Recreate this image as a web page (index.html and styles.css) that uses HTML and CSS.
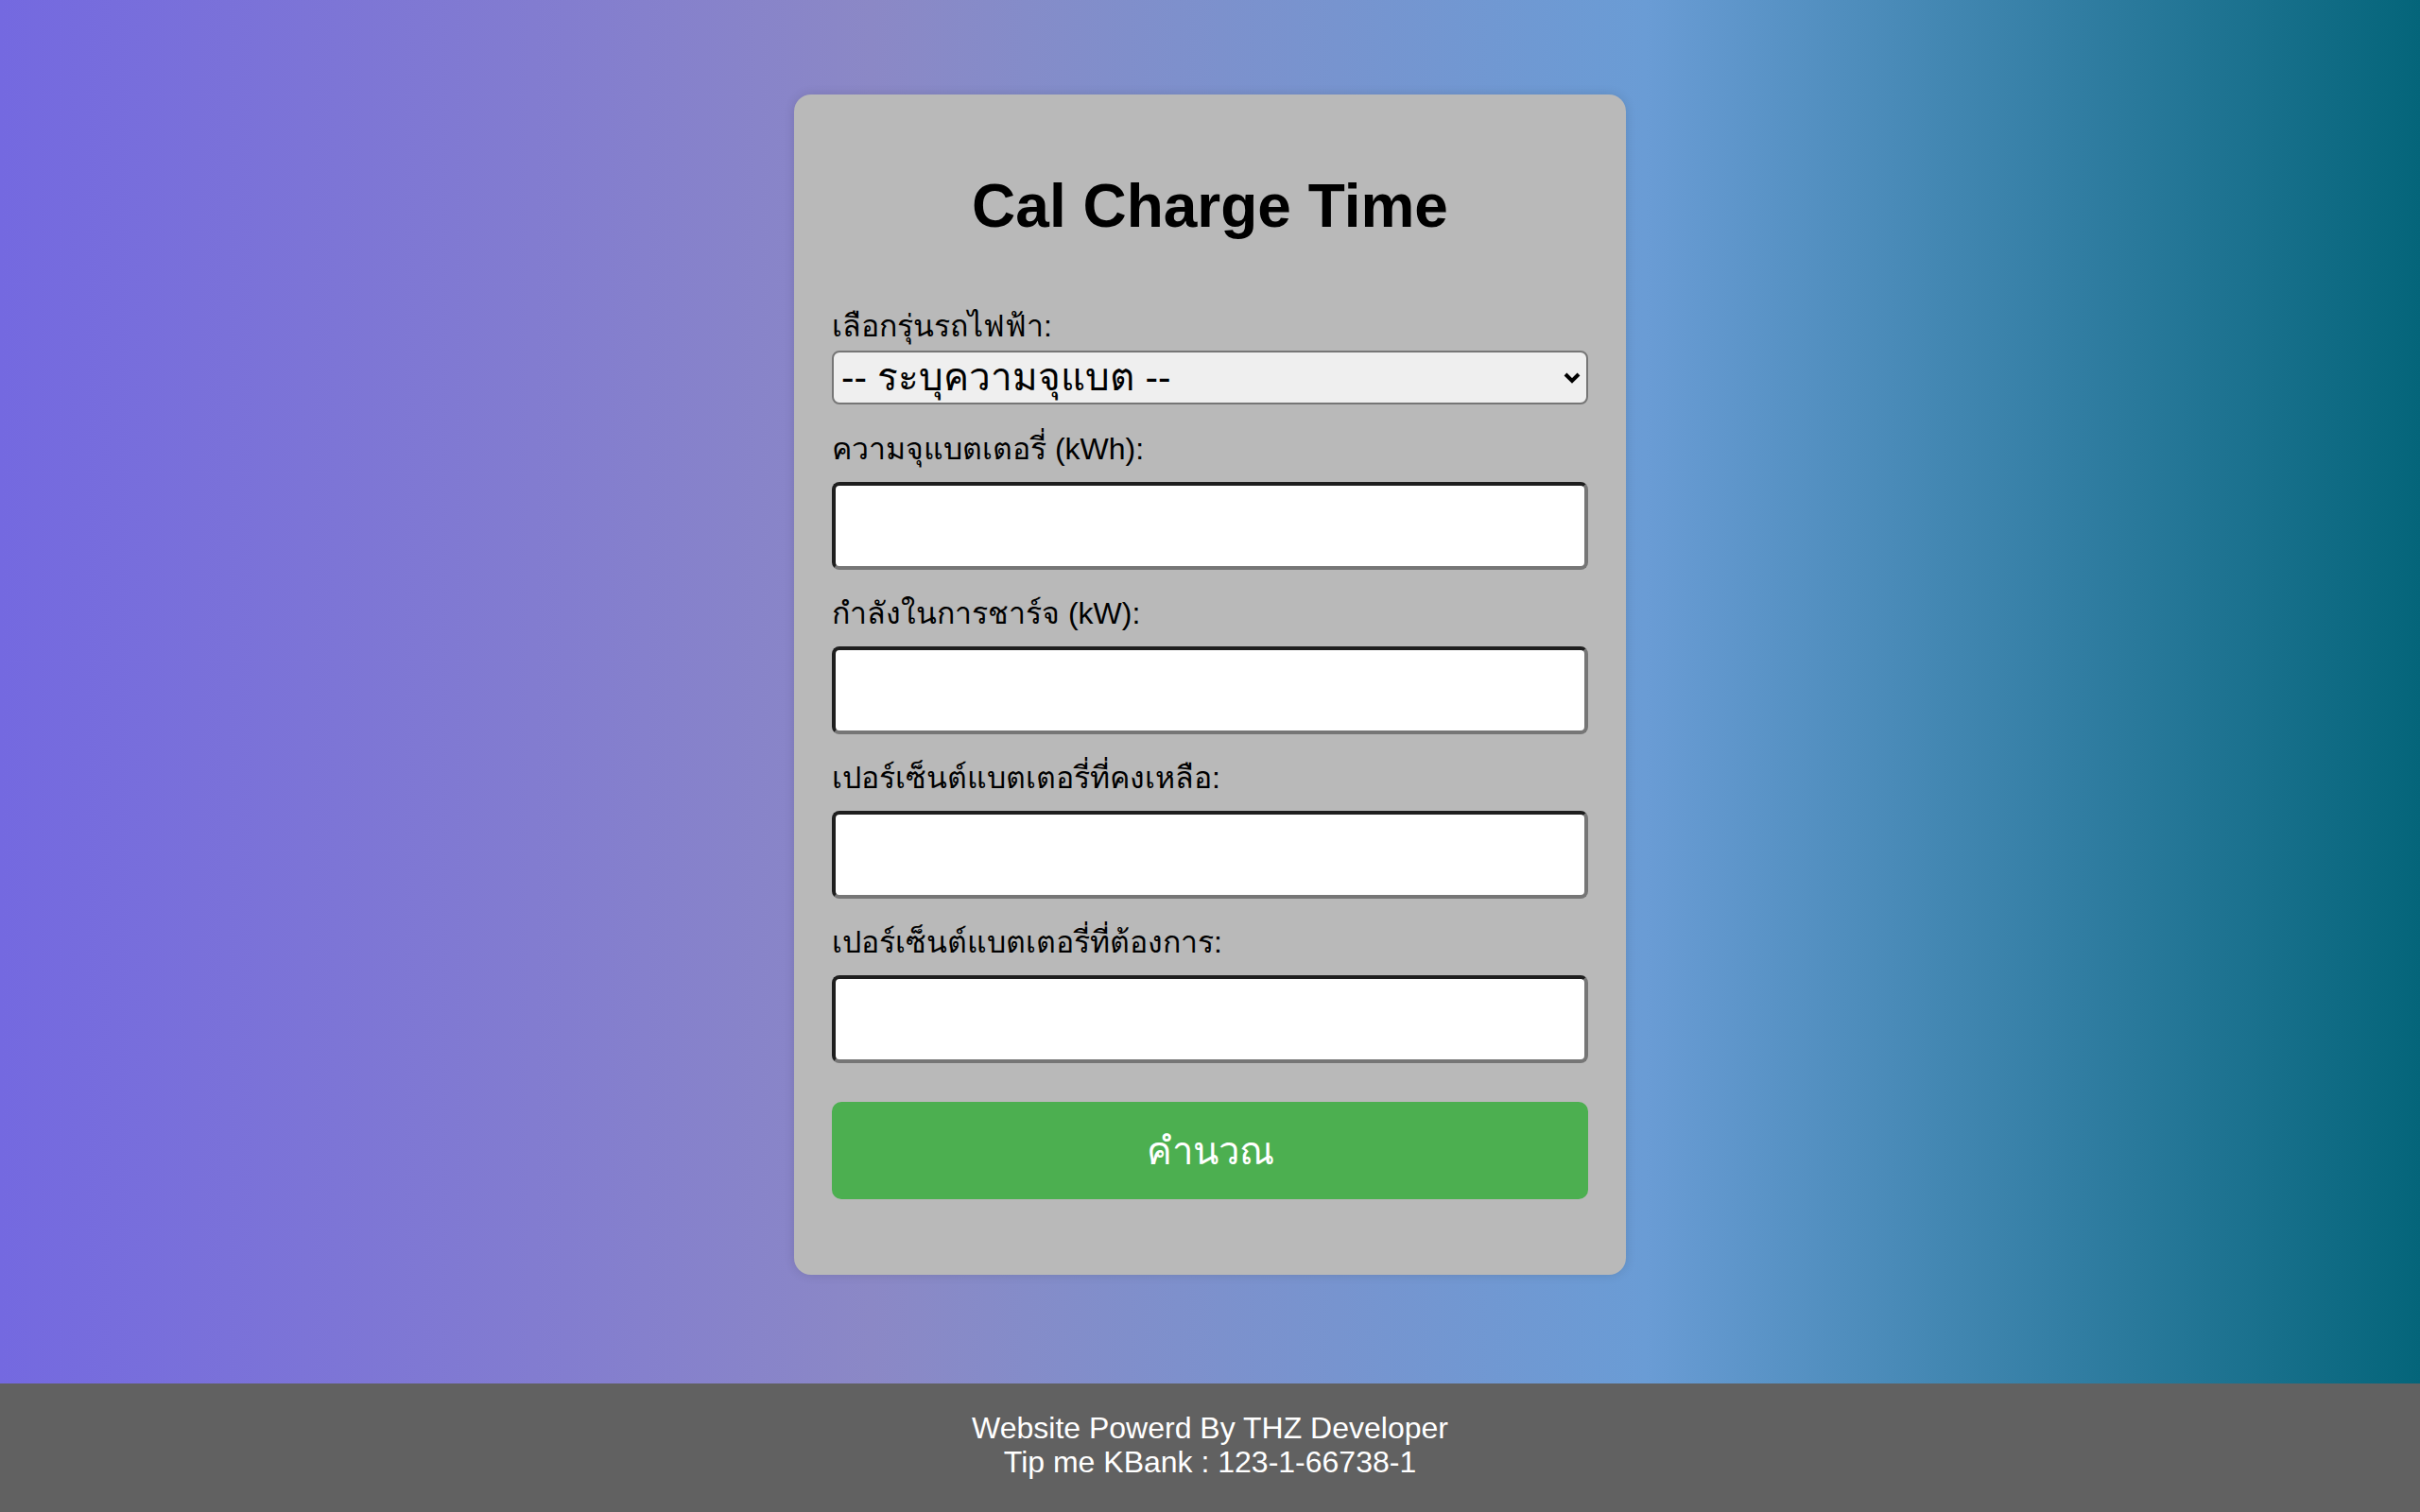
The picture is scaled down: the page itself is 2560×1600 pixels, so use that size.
FILE: index.html
```html
<!DOCTYPE html>
<html lang="th">
<head>
<meta charset="utf-8">
<title>Cal Charge Time</title>
<link rel="stylesheet" href="styles.css">
</head>
<body>
<main class="page">
  <div class="card">
    <h1 class="title">Cal Charge Time</h1>
    <form class="form">
      <label class="label label-first" for="car">เลือกรุ่นรถไฟฟ้า:</label>
      <div class="select-wrap">
        <select class="select" id="car">
          <option>-- ระบุความจุแบต --</option>
        </select>
        <svg class="chevron" width="18" height="12" viewBox="0 0 18 12"><path d="M2 2 L9 9 L16 2" fill="none" stroke="#000" stroke-width="4"/></svg>
      </div>
      <label class="label" for="cap">ความจุแบตเตอรี่ (kWh):</label>
      <input class="input" id="cap" type="text">
      <label class="label" for="pow">กำลังในการชาร์จ (kW):</label>
      <input class="input" id="pow" type="text">
      <label class="label" for="rem">เปอร์เซ็นต์แบตเตอรี่ที่คงเหลือ:</label>
      <input class="input" id="rem" type="text">
      <label class="label" for="tgt">เปอร์เซ็นต์แบตเตอรี่ที่ต้องการ:</label>
      <input class="input" id="tgt" type="text">
      <button class="button" type="button">คำนวณ</button>
    </form>
  </div>
</main>
<footer class="footer">
  <div>Website Powerd By THZ Developer</div>
  <div>Tip me KBank : 123-1-66738-1</div>
</footer>
</body>
</html>
```

FILE: styles.css
```css
html, body {
  margin: 0;
  padding: 0;
}
body {
  min-height: 100vh;
  display: flex;
  flex-direction: column;
  font-family: "Liberation Sans", Arial, sans-serif;
  background: linear-gradient(to right, #7469e0 0%, #8b88c6 36%, #6a9cd5 68%, #04657a 100%);
}
.page {
  flex: 1;
  display: flex;
  justify-content: center;
  align-items: flex-start;
  padding-top: 100px;
}
.card {
  width: 880px;
  box-sizing: border-box;
  padding: 40px;
  background: #b9b9b9;
  border-radius: 18px;
  box-shadow: 0 0 12px rgba(0, 0, 0, 0.12);
}
.title {
  margin: 41px 0 70px;
  font-size: 64px;
  line-height: 74px;
  font-weight: bold;
  text-align: center;
  color: #000;
}
.form {
  display: flex;
  flex-direction: column;
}
.label {
  display: block;
  font-size: 32px;
  line-height: 40px;
  height: 40px;
  margin-top: 26px;
  color: #000;
}
.label-first {
  margin-top: 0;
}
.select-wrap {
  position: relative;
  margin-top: 6px;
  margin-bottom: 1px;
}
.select {
  display: block;
  width: 100%;
  height: 57px;
  box-sizing: border-box;
  -webkit-appearance: none;
  appearance: none;
  font-family: "Liberation Sans", Arial, sans-serif;
  font-size: 40.5px;
  line-height: 53px;
  padding: 0 40px 0 8px;
  border: 2px solid #767676;
  border-radius: 8px;
  background: #efefef;
  color: #000;
}
.chevron {
  position: absolute;
  right: 8px;
  top: 23px;
}
.input {
  display: block;
  width: 100%;
  height: 93px;
  box-sizing: border-box;
  margin-top: 15px;
  border-width: 4px;
  border-style: solid;
  border-color: #1e1e1e #767676 #767676 #1e1e1e;
  border-radius: 8px;
  background: #fff;
  font-size: 32px;
}
.button {
  display: block;
  width: 100%;
  height: 103px;
  margin-top: 41px;
  margin-bottom: 40px;
  border: none;
  border-radius: 10px;
  background: #4caf50;
  color: #fff;
  font-family: "Liberation Sans", Arial, sans-serif;
  font-size: 40px;
}
.footer {
  background: #616161;
  color: #fff;
  text-align: center;
  font-size: 32px;
  line-height: 36px;
  padding: 29px 0 35px;
}
```
